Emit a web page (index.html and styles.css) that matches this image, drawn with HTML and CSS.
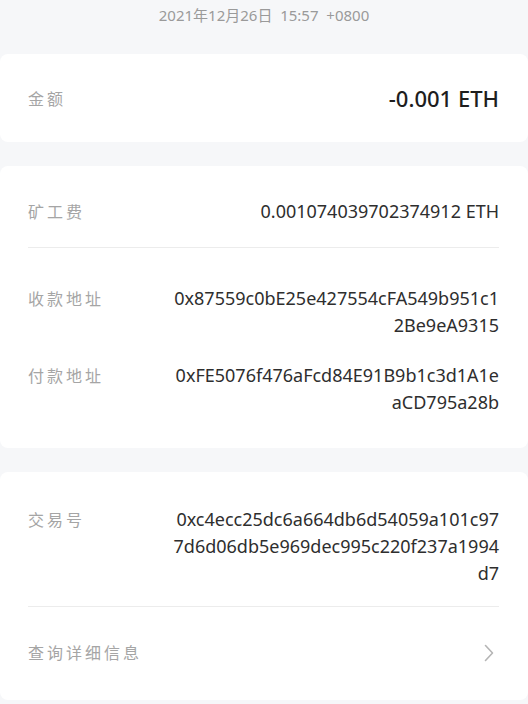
FILE: index.html
```html
<!DOCTYPE html>
<html lang="zh">
<head>
<meta charset="utf-8">
<link rel="stylesheet" href="styles.css">
</head>
<body>
<div class="page">
  <div class="date">2021年12月26日&nbsp;&nbsp;15:57&nbsp;&nbsp;+0800</div>

  <section class="card card-amount">
    <div class="label">金额</div>
    <div class="amount">-0.001 ETH</div>
  </section>

  <section class="card card-info">
    <div class="row row-fee">
      <div class="label">矿工费</div>
      <div class="value">0.001074039702374912 ETH</div>
    </div>
    <div class="divider"></div>
    <div class="row row-to">
      <div class="label">收款地址</div>
      <div class="value addr">0x87559c0bE25e427554cFA549b951c12Be9eA9315</div>
    </div>
    <div class="row row-from">
      <div class="label">付款地址</div>
      <div class="value addr">0xFE5076f476aFcd84E91B9b1c3d1A1eaCD795a28b</div>
    </div>
  </section>

  <section class="card card-tx">
    <div class="row row-hash">
      <div class="label">交易号</div>
      <div class="value addr">0xc4ecc25dc6a664db6d54059a101c977d6d06db5e969dec995c220f237a1994d7</div>
    </div>
    <div class="divider"></div>
    <div class="row row-link">
      <div class="label">查询详细信息</div>
      <svg class="chev" width="10" height="18" viewBox="0 0 10 18"><path d="M1.5 1.5 L8.5 9 L1.5 16.5" fill="none" stroke="#b5b5b5" stroke-width="1.6" stroke-linecap="round" stroke-linejoin="round"/></svg>
    </div>
  </section>
</div>
</body>
</html>
```

FILE: styles.css
```css
html, body {
  margin: 0;
  padding: 0;
  background: #f6f7f9;
}
body {
  font-family: "Noto Sans", "Noto Sans CJK SC", sans-serif;
  color: #333;
}
.page {
  width: 528px;
  height: 704px;
  overflow: hidden;
}
.date {
  text-align: center;
  font-size: 15px;
  line-height: 30px;
  color: #9a9a9a;
}
.card {
  background: #fff;
  border-radius: 8px;
  padding: 0 29px 0 28px;
}
.card-amount {
  margin-top: 24px;
  height: 88px;
  display: flex;
  align-items: center;
  justify-content: space-between;
}
.label {
  font-family: "Noto Sans CJK SC", sans-serif;
  font-size: 16px;
  line-height: 27px;
  color: #a5a5a5;
  letter-spacing: 3px;
  flex: none;
}
.amount {
  font-size: 22px;
  font-weight: 500;
  color: #1e1e1e;
}
.card-info {
  margin-top: 24px;
  height: 282px;
  box-sizing: border-box;
  padding-top: 32px;
}
.row {
  display: flex;
  justify-content: space-between;
  align-items: flex-start;
}
.value {
  font-size: 18px;
  line-height: 27px;
  color: #2e2e2e;
  text-align: right;
}
.addr {
  width: 326px;
  word-break: break-all;
}
.row-fee {
  padding-bottom: 22px;
}
.divider {
  height: 1px;
  background: #ececec;
}
.row-to {
  padding-top: 37px;
}
.row-from {
  padding-top: 23px;
}
.card-tx {
  margin-top: 24px;
  height: 228px;
  box-sizing: border-box;
  padding-top: 34px;
}
.row-hash {
  padding-bottom: 19px;
}
.row-link {
  padding-top: 32px;
  align-items: center;
}
.chev {
  margin-right: 5px;
}
```
